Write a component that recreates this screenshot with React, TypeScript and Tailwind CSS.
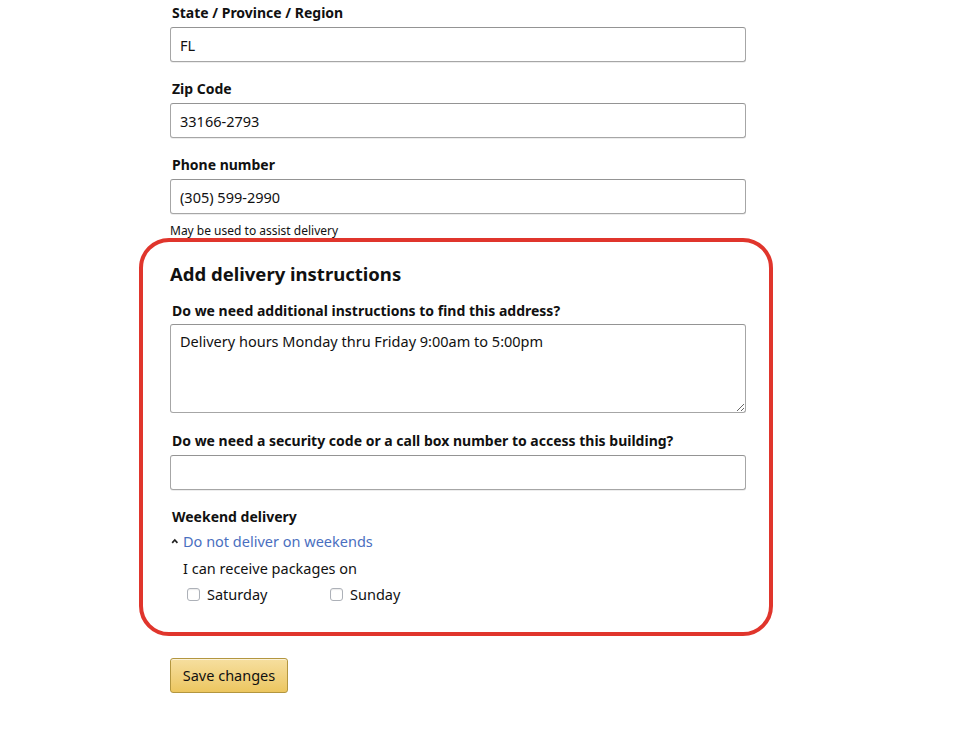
import React from "react";

const font = { fontFamily: '"Noto Sans", "Open Sans", Arial, sans-serif' };

function Label({ children }: { children: React.ReactNode }) {
  return <div className="text-[14px] font-bold leading-[20px] text-[#111] pl-[2px]">{children}</div>;
}

function TextInput({ value }: { value?: string }) {
  return (
    <input
      readOnly
      defaultValue={value}
      className="mt-[4px] block h-[35px] w-[576px] rounded-[3px] border border-[#a6a6a6] border-t-[#949494] bg-white px-[9px] text-[14.5px] text-[#111] shadow-[inset_0_1px_0_rgba(255,255,255,0.5),0_1px_0_rgba(0,0,0,0.07)] outline-none"
    />
  );
}

function Checkbox({ label }: { label: string }) {
  return (
    <div className="flex items-center gap-[7px]">
      <span className="block h-[13px] w-[13px] rounded-[3px] border border-[#adb1b8] bg-white shadow-[inset_0_1px_1px_rgba(0,0,0,0.08)]" />
      <span className="text-[14.5px] leading-[20px] text-[#111]">{label}</span>
    </div>
  );
}

export default function App() {
  return (
    <div className="min-h-[750px] w-[960px] bg-white" style={font}>
      <div className="pl-[170px] pt-[3px]">
        <Label>State / Province / Region</Label>
        <TextInput value="FL" />
        <div className="mt-[17px]">
          <Label>Zip Code</Label>
        </div>
        <TextInput value="33166-2793" />
        <div className="mt-[17px]">
          <Label>Phone number</Label>
        </div>
        <TextInput value="(305) 599-2990" />
        <div className="mt-[10px] text-[12px] leading-[14px] text-[#111]">May be used to assist delivery</div>

        <div className="ml-[-31px] w-[634px] rounded-[30px] border-[4px] border-[#e0352c] pl-[27px] pr-[23px] pt-[20px] pb-[28px]">
          <div className="text-[18.5px] font-bold leading-[24px] text-[#111]">Add delivery instructions</div>
          <div className="mt-[15px]">
            <Label>Do we need additional instructions to find this address?</Label>
          </div>
          <textarea
            readOnly
            defaultValue="Delivery hours Monday thru Friday 9:00am to 5:00pm"
            className="mt-[3px] block h-[89px] w-[576px] rounded-[3px] border border-[#a6a6a6] border-t-[#949494] bg-white px-[9px] py-[6px] text-[14.5px] leading-[20px] text-[#111] outline-none"
          />
          <div className="mt-[18px]">
            <Label>Do we need a security code or a call box number to access this building?</Label>
          </div>
          <TextInput />
          <div className="mt-[17px]">
            <Label>Weekend delivery</Label>
          </div>
          <div className="mt-[4px] flex items-center">
            <svg width="13" height="20" viewBox="0 0 13 20" className="shrink-0">
              <path d="M2.2 11.8 L4.8 9 L7.4 11.8" fill="none" stroke="#222" strokeWidth="1.7" />
            </svg>
            <span className="text-[14.5px] leading-[20px] text-[#4a6fc0]">Do not deliver on weekends</span>
          </div>
          <div className="mt-[7px] pl-[13px] text-[14.5px] leading-[20px] text-[#111]">I can receive packages on</div>
          <div className="mt-[6px] flex pl-[17px]">
            <div className="w-[143px]">
              <Checkbox label="Saturday" />
            </div>
            <Checkbox label="Sunday" />
          </div>
        </div>

        <button className="mt-[22px] flex h-[35px] w-[118px] items-center justify-center rounded-[3px] border border-[#b3963f] bg-gradient-to-b from-[#f6df9f] to-[#ecc65f] text-[14.5px] text-[#111] shadow-[inset_0_1px_0_rgba(255,255,255,0.6)]">
          Save changes
        </button>
      </div>
    </div>
  );
}
